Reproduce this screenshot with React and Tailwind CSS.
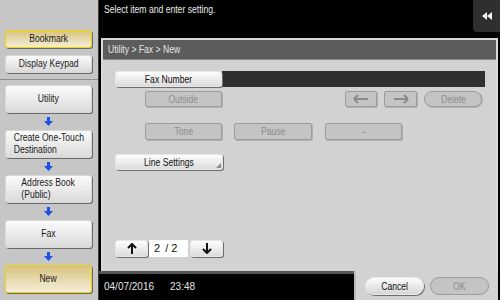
import React from 'react';

const font = { fontFamily: '"Liberation Sans", Arial, sans-serif' };

// narrow face look: Liberation Sans squeezed horizontally
const N = ({ children, className = '' }) => (
  <span className={`inline-block whitespace-nowrap scale-x-[0.86] ${className}`}>{children}</span>
);

const SideButton = ({ label, active, tall }) => (
  <div
    className={`flex items-center justify-center text-left leading-[12px] text-[10px] text-[#1a1a1a] rounded-[3px] border shadow-[1px_1px_0_#6a6a6a] ${
      tall ? 'h-[28px]' : 'h-[18px]'
    } ${
      active
        ? 'border-[#f2d400] bg-gradient-to-b from-[#d9c37f] to-[#f4eed8]'
        : 'border-[#d8d8d8] bg-gradient-to-b from-[#fbfbfb] to-[#dadada]'
    }`}
  >
    <N>{label}</N>
  </div>
);

const DownArrow = () => (
  <div className="h-[17px] flex items-center justify-center">
    <svg width="9" height="9" viewBox="0 0 9 9">
      <path d="M3 0h3v4h3L4.5 9 0 4h3z" fill="#1d4fe6" />
    </svg>
  </div>
);

const Dim = ({ children, className = '' }) => (
  <div
    className={`h-[16px] flex items-center justify-center text-[10px] text-[#8c8c8c] bg-[#c4c4c4] border border-[#9c9c9c] rounded-[2px] shadow-[1px_1px_0_#b0b0b0] ${className}`}
  >
    {children}
  </div>
);

const Raised = ({ children, className = '' }) => (
  <div
    className={`relative flex items-center justify-center text-[10px] text-[#111] bg-gradient-to-b from-[#fdfdfd] to-[#dcdcdc] border border-[#e6e6e6] rounded-[3px] shadow-[1px_1px_0_#6e6e6e] ${className}`}
  >
    {children}
  </div>
);

export default function App() {
  return (
    <div className="w-[500px] h-[300px] flex bg-black overflow-hidden" style={font}>
      <nav className="w-[99px] h-full bg-[#c6c6c6] border-r border-[#3a3a3a] flex flex-col">
        <div className="h-[79px] px-[5px] pr-[6px] pt-[30px] flex flex-col gap-[7px]">
          <SideButton label="Bookmark" active />
          <SideButton label="Display Keypad" />
        </div>
        <div className="h-px bg-[#8e8e8e]" />
        <div className="px-[5px] pr-[6px] pt-[5px] flex flex-col">
          <SideButton label="Utility" tall />
          <DownArrow />
          <SideButton label={<>Create One-Touch<br />Destination</>} tall />
          <DownArrow />
          <SideButton label={<>Address Book<br />(Public)</>} tall />
          <DownArrow />
          <SideButton label="Fax" tall />
          <DownArrow />
          <SideButton label="New" tall active />
        </div>
      </nav>

      <main className="flex-1 flex flex-col">
        <div className="h-[38px] flex justify-between">
          <div className="pl-[5px] pt-[2px] text-[10px] text-[#e8e8e8]">
            <N className="origin-left">Select item and enter setting.</N>
          </div>
          <div className="w-[27px] h-[32px] bg-[#2f2f2f] rounded-bl-[4px] flex items-center justify-center">
            <svg width="10" height="8" viewBox="0 0 10 8">
              <path d="M0 4L5 0v8zM5 4l5-4v8z" fill="#f2f2f2" />
            </svg>
          </div>
        </div>

        <div className="ml-[2px] mr-[2px] h-[233px] bg-[#d2d2d2] border-2 border-b-0 border-[#d9d9d9] flex flex-col">
          <div className="h-[20px] bg-[#5c5c5c] border-b border-[#8a8a8a] text-[10px] text-[#e4e4e4] flex items-center pl-[5px]">
            <N className="origin-left">Utility &gt; Fax &gt; New</N>
          </div>
          <div className="flex-1 pl-[12px] pr-[11px] pt-[11px] flex flex-col">
            <div className="flex h-[16px]">
              <Raised className="w-[107px] h-[16px]"><N>Fax Number</N></Raised>
              <div className="flex-1 bg-[#2f2f2f]" />
            </div>
            <div className="flex mt-[4px] h-[16px]">
              <Dim className="w-[77px] ml-[30px]"><N>Outside</N></Dim>
              <Dim className="w-[32px] ml-[123px]">
                <svg width="16" height="10" viewBox="0 0 16 10"><path d="M1 5h14M1 5l4-4M1 5l4 4" stroke="#8a8a8a" strokeWidth="2" fill="none" /></svg>
              </Dim>
              <Dim className="w-[33px] ml-[7px]">
                <svg width="16" height="10" viewBox="0 0 16 10"><path d="M1 5h14M15 5l-4-4M15 5l-4 4" stroke="#8a8a8a" strokeWidth="2" fill="none" /></svg>
              </Dim>
              <Dim className="w-[58px] ml-[7px] rounded-full"><N>Delete</N></Dim>
            </div>
            <div className="flex mt-[16px] h-[17px]">
              <Dim className="w-[77px] ml-[30px] h-[17px]"><N>Tone</N></Dim>
              <Dim className="w-[78px] ml-[12px] h-[17px]"><N>Pause</N></Dim>
              <Dim className="w-[77px] ml-[13px] h-[17px]">-</Dim>
            </div>
            <Raised className="w-[108px] h-[16px] mt-[14px]">
              <N>Line Settings</N>
              <svg className="absolute right-[1px] bottom-[1px]" width="5" height="5" viewBox="0 0 5 5"><path d="M5 0v5H0z" fill="#8a8a8a" /></svg>
            </Raised>
            <div className="flex items-center mt-[70px] h-[17px]">
              <Raised className="w-[33px] h-[17px]">
                <svg width="10" height="11" viewBox="0 0 10 11"><path d="M5 1v10M1 5l4-4 4 4" stroke="#111" strokeWidth="2" fill="none" /></svg>
              </Raised>
              <div className="w-[39px] h-[17px] ml-[1px] bg-white text-[11px] text-[#111] flex items-center pl-[5px] gap-[5px]">
                <span>2</span><span>/ 2</span>
              </div>
              <Raised className="w-[33px] h-[17px] ml-[2px]">
                <svg width="10" height="11" viewBox="0 0 10 11"><path d="M5 0v10M1 6l4 4 4-4" stroke="#111" strokeWidth="2" fill="none" /></svg>
              </Raised>
            </div>
          </div>
        </div>

        <div className="flex-1 flex">
          <div className="w-[255px] border-t-[3px] border-[#555] text-[10px] text-[#e6e6e6] flex items-center pl-[5px] gap-[16px] pb-[2px]">
            <span>04/07/2016</span>
            <span>23:48</span>
          </div>
          <div className="flex-1 mr-[2px] bg-[#d2d2d2] border-l-2 border-[#b8b8b8] flex items-center gap-[6px] pl-[9px] pt-[1px]">
            <div className="w-[59px] h-[18px] rounded-full bg-gradient-to-b from-[#fdfdfd] to-[#d6d6d6] border border-[#e8e8e8] shadow-[1px_1px_0_#6e6e6e] text-[10px] text-[#111] flex items-center justify-center"><N>Cancel</N></div>
            <div className="w-[59px] h-[18px] rounded-full bg-[#c4c4c4] border border-[#9c9c9c] text-[10px] text-[#8c8c8c] flex items-center justify-center"><N>OK</N></div>
          </div>
        </div>
      </main>
    </div>
  );
}
